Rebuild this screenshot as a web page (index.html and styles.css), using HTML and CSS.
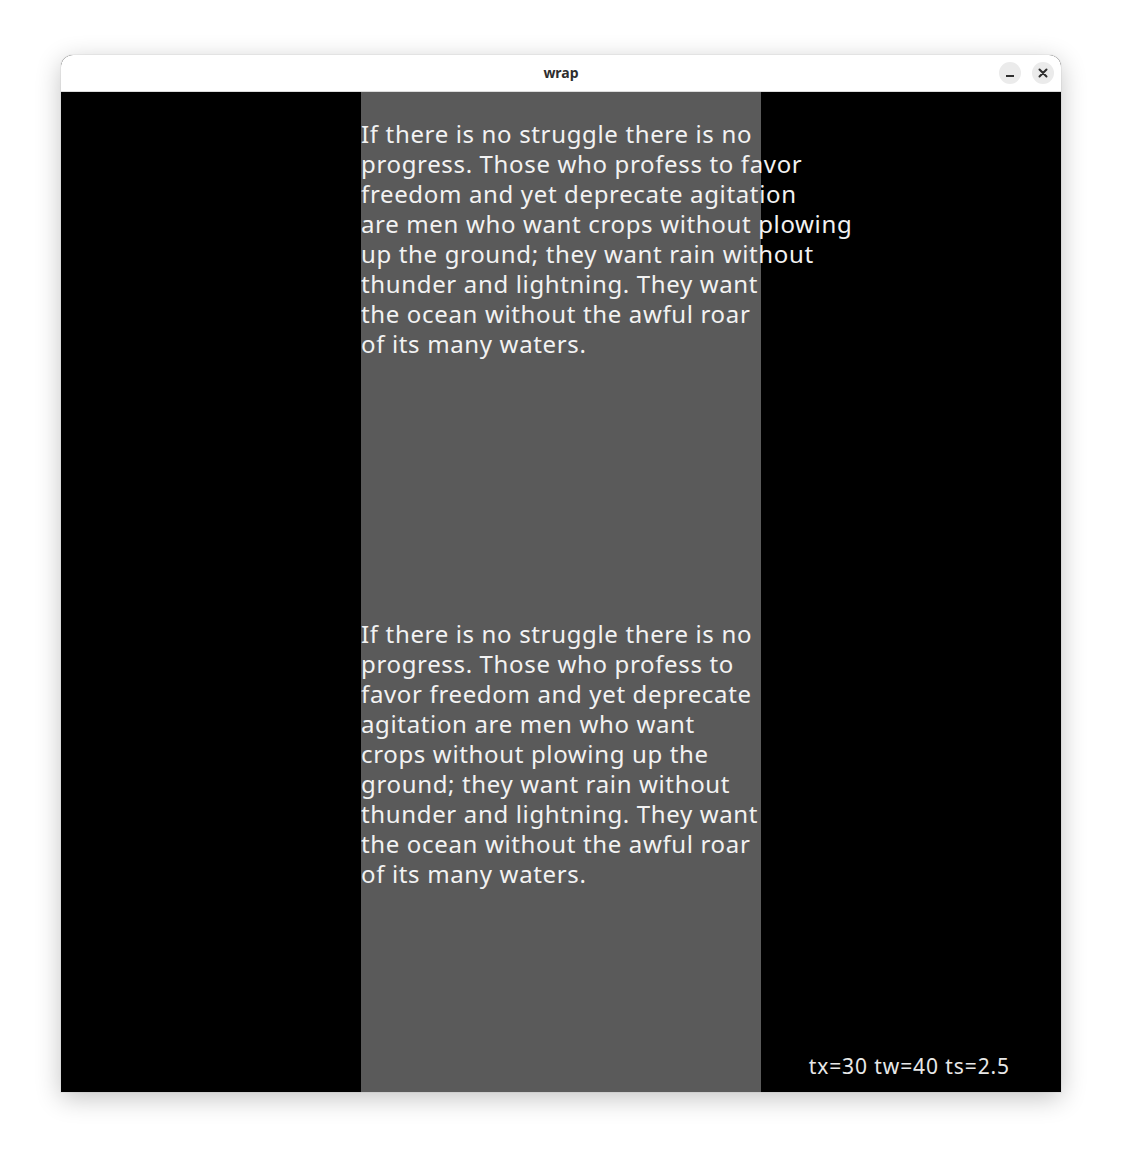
FILE: index.html
```html
<!DOCTYPE html>
<html>
<head>
<meta charset="utf-8">
<title>wrap</title>
<link rel="stylesheet" href="styles.css">
</head>
<body>
<div class="window">
  <div class="titlebar">
    <div class="title">wrap</div>
    <div class="controls">
      <button class="ctl" aria-label="minimize">
        <svg width="10" height="10" viewBox="0 0 10 10"><rect x="1" y="7" width="8" height="2" fill="#2e2e2e"/></svg>
      </button>
      <button class="ctl" aria-label="close">
        <svg width="10" height="10" viewBox="0 0 10 10"><path d="M1.5 1.5 L8.5 8.5 M8.5 1.5 L1.5 8.5" stroke="#2e2e2e" stroke-width="2" stroke-linecap="round"/></svg>
      </button>
    </div>
  </div>
  <div class="canvas">
    <div class="side"></div>
    <div class="column">
      <div class="para para-top">
        <div>If there is no struggle there is no</div>
        <div>progress. Those who profess to favor</div>
        <div>freedom and yet deprecate agitation</div>
        <div>are men who want crops without plowing</div>
        <div>up the ground; they want rain without</div>
        <div>thunder and lightning. They want</div>
        <div>the ocean without the awful roar</div>
        <div>of its many waters.</div>
      </div>
      <div class="para para-bottom">
        <div>If there is no struggle there is no</div>
        <div>progress. Those who profess to</div>
        <div>favor freedom and yet deprecate</div>
        <div>agitation are men who want</div>
        <div>crops without plowing up the</div>
        <div>ground; they want rain without</div>
        <div>thunder and lightning. They want</div>
        <div>the ocean without the awful roar</div>
        <div>of its many waters.</div>
      </div>
    </div>
    <div class="side side-right">
      <div class="status">tx=30 tw=40 ts=2.5</div>
    </div>
  </div>
</div>
</body>
</html>
```
FILE: styles.css
```css
html, body {
  margin: 0;
  padding: 0;
  background: #ffffff;
}
body {
  padding: 55px 0 0 61px;
  height: 1159px;
  box-sizing: border-box;
  overflow: hidden;
}
.window {
  width: 1000px;
  border-radius: 12px 12px 0 0;
  box-shadow: 0 6px 26px rgba(0,0,0,0.24), 0 0 0 1px rgba(0,0,0,0.04);
  background: #000;
}
.titlebar {
  height: 36px;
  background: #ffffff;
  border-bottom: 1px solid #dcdcdc;
  border-radius: 12px 12px 0 0;
  display: flex;
  align-items: center;
  justify-content: center;
  position: relative;
}
.title {
  font-family: "Noto Sans", "DejaVu Sans", sans-serif;
  font-weight: bold;
  font-size: 14px;
  color: #2e2e2e;
  margin-top: -2px;
}
.controls {
  position: absolute;
  right: 7px;
  top: 7px;
  display: flex;
  gap: 11px;
}
.ctl {
  width: 22px;
  height: 22px;
  border-radius: 50%;
  border: none;
  padding: 0;
  background: #ebebeb;
  display: flex;
  align-items: center;
  justify-content: center;
}
.canvas {
  height: 1000px;
  display: flex;
  background: #000;
}
.side {
  width: 300px;
  flex: none;
}
.column {
  width: 400px;
  flex: none;
  background: #5a5a5a;
  position: relative;
  z-index: 1;
}
.para {
  font-family: "Noto Sans", "DejaVu Sans", sans-serif;
  font-size: 24px;
  line-height: 30px;
  letter-spacing: 0.65px;
  color: #f2f2f2;
  white-space: nowrap;
}
.para-top {
  padding-top: 27px;
}
.para-bottom {
  padding-top: 260px;
}
.side-right {
  display: flex;
  flex-direction: column;
  justify-content: flex-end;
  align-items: flex-end;
}
.status {
  font-family: "Noto Sans", "DejaVu Sans", sans-serif;
  font-size: 21px;
  line-height: 24px;
  letter-spacing: 0.9px;
  color: #e8e8e8;
  padding: 0 51px 14px 0;
}
```
